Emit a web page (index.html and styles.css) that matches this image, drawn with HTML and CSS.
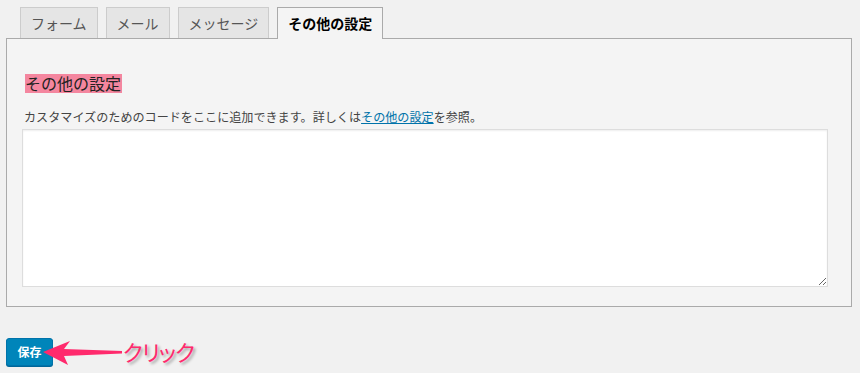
FILE: index.html
```html
<!DOCTYPE html>
<html lang="ja">
<head>
<meta charset="utf-8">
<link rel="stylesheet" href="styles.css">
</head>
<body>
<div class="page">
  <nav class="tabs">
    <a class="tab">フォーム</a>
    <a class="tab">メール</a>
    <a class="tab">メッセージ</a>
    <a class="tab tab-active">その他の設定</a>
  </nav>
  <section class="panel">
    <h2 class="panel-title"><span class="mark">その他の設定</span></h2>
    <p class="desc">カスタマイズのためのコードをここに追加できます。詳しくは<a class="link">その他の設定</a>を参照。</p>
    <textarea class="code"></textarea>
  </section>
  <div class="actions">
    <button class="save">保存</button>
    <div class="note">
      <svg class="arrow" width="90" height="30" viewBox="0 0 90 30">
        <polygon points="3,13 30,2 24,10 82,12 82,14.5 24,17 28,26" fill="#ff2a6d"/>
      </svg>
      <span class="note-text">クリック</span>
    </div>
  </div>
</div>
</body>
</html>
```

FILE: styles.css
```css
html, body {
  margin: 0;
  padding: 0;
  background: #f1f1f1;
  font-family: "Noto Sans CJK JP", "Noto Sans", sans-serif;
  color: #444;
}
.page {
  width: 860px;
  height: 373px;
  overflow: hidden;
}
.tabs {
  display: flex;
  gap: 8px;
  padding: 7px 0 0 20px;
  height: 31px;
  align-items: flex-end;
}
.tab {
  display: block;
  box-sizing: border-box;
  height: 31px;
  padding: 0 10px;
  border: 1px solid #ccc;
  border-bottom: none;
  background: #e5e5e5;
  color: #555;
  font-size: 14px;
  line-height: 30px;
  font-weight: 400;
}
.tab-active {
  height: 32px;
  margin-bottom: -1px;
  position: relative;
  z-index: 1;
  background: #f4f4f4;
  border-color: #aaa;
  color: #000;
  font-weight: 700;
  padding: 0 10px;
  line-height: 30px;
}
.panel {
  box-sizing: border-box;
  margin-left: 6px;
  width: 846px;
  height: 269px;
  border: 1px solid #aaa;
  background: #f4f4f4;
  padding: 35px 23px 0 15px;
}
.panel-title {
  margin: 0 0 15px 3px;
  font-size: 16px;
  font-weight: 400;
  line-height: 19px;
  height: 19px;
}
.mark {
  display: inline-block;
  background: #f4869f;
  color: #222;
  line-height: 19px;
  height: 19px;
  padding: 0 1px 0 0;
}
.desc {
  margin: 0 0 3px 2px;
  font-size: 12.1px;
  line-height: 18px;
  color: #444;
}
.link {
  color: #0073aa;
  text-decoration: underline;
}
.code {
  display: block;
  box-sizing: border-box;
  width: 806px;
  height: 158px;
  margin: 0;
  border: 1px solid #ddd;
  background: #fff;
  box-shadow: inset 0 1px 2px rgba(0,0,0,0.07);
  resize: both;
}
.actions {
  position: relative;
  padding: 31px 0 0 6px;
}
.save {
  display: block;
  box-sizing: border-box;
  width: 47px;
  height: 28px;
  background: #0085ba;
  border: 1px solid #0073aa;
  border-radius: 3px;
  box-shadow: 0 1px 0 #006799;
  color: #fff;
  font-family: "Noto Sans CJK JP", sans-serif;
  font-size: 12px;
  font-weight: 700;
  padding: 0;
  line-height: 26px;
}
.note {
  position: absolute;
  left: 40px;
  top: 31px;
  width: 160px;
  height: 32px;
}
.arrow {
  position: absolute;
  left: 0;
  top: 1px;
}
.note-text {
  position: absolute;
  left: 83px;
  top: -1px;
  font-size: 22px;
  line-height: 28px;
  letter-spacing: -1px;
  font-feature-settings: "palt";
  color: #ff2a6d;
  text-shadow: 2px 2px 3px rgba(0,0,0,0.35);
}
```
